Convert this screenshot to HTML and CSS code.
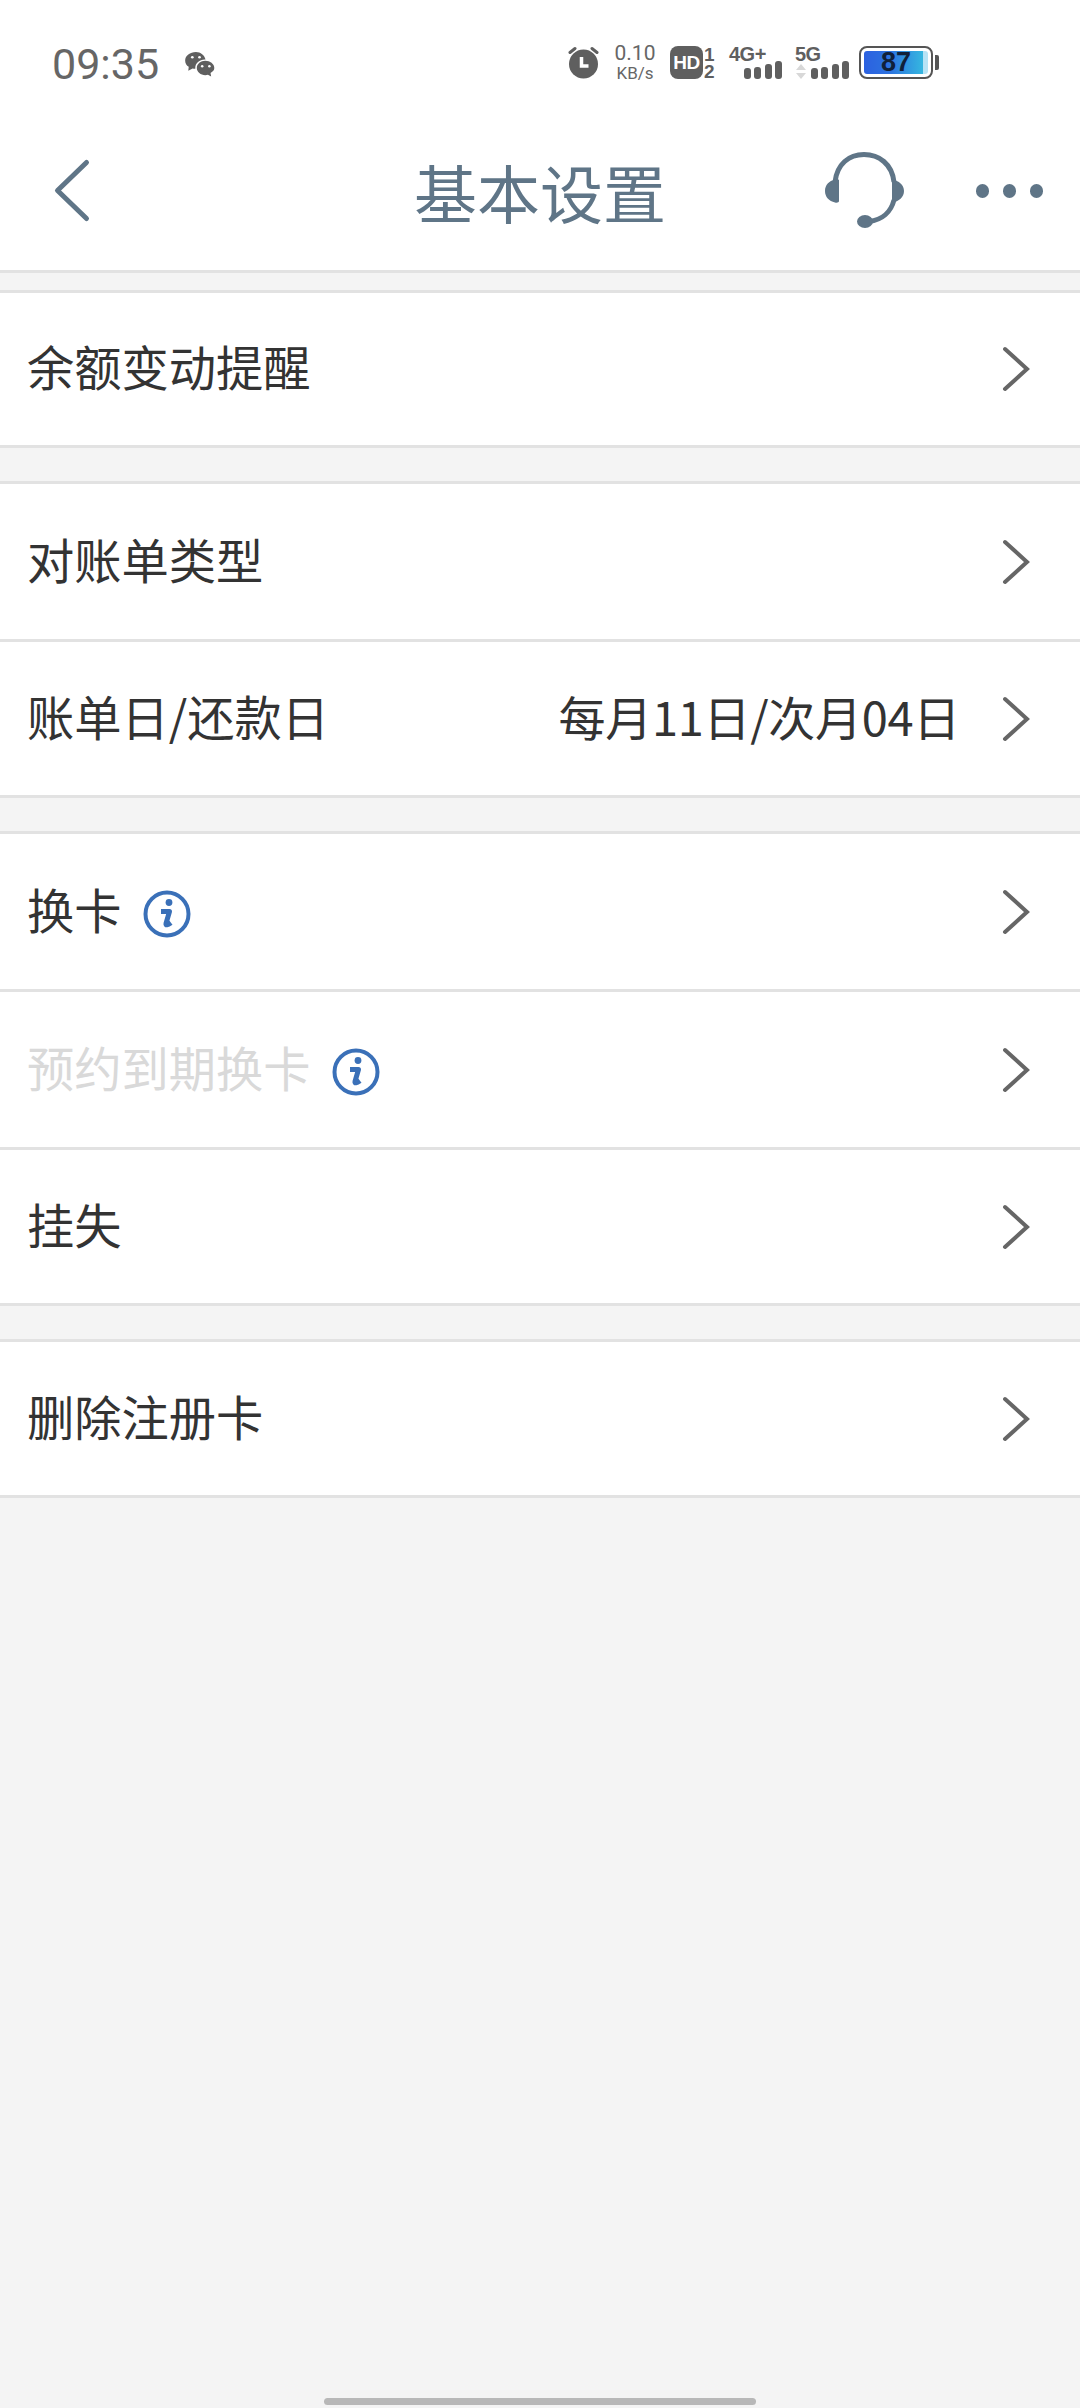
FILE: index.html
```html
<!DOCTYPE html>
<html lang="zh">
<head>
<meta charset="utf-8">
<title>基本设置</title>
<link rel="stylesheet" href="styles.css">
</head>
<body>
<div class="status">
  <div class="status-left">
    <span class="time">09:35</span>
    <svg class="wechat" width="31" height="26" viewBox="0 0 34 29"><path d="M13 1C6.500 1 1 5 1 10.500c0 3 1.500 5.500 4 7.200L4.500 22l4.800-2.500c1 .3 2 .4 3 .4 0-.3 0-.6 0-.9 0-5.500 4.700-9.500 10.500-9.500h.9C22.700 4.500 18.300 1 13 1z" fill="#5f5f5f"/><path d="M23.500 11c-5.200 0-9.500 3.500-9.500 8s4.300 8 9.500 8c1 0 2-.1 2.900-.4L30 28.500l-.7-4c2.800-1.500 4.200-3.400 4.200-5.500 0-4.500-4.800-8-10-8z" fill="#5f5f5f"/><circle cx="9" cy="7" r="1.500" fill="#fff"/><circle cx="17" cy="7" r="1.500" fill="#fff"/><circle cx="20" cy="17" r="1.400" fill="#fff"/><circle cx="28" cy="17" r="1.400" fill="#fff"/></svg>
  </div>
  <div class="status-right">
    <svg class="alarm" width="31" height="33" viewBox="0 0 31 33"><circle cx="15.500" cy="18" r="14.500" fill="#5f5f5f"/><path d="M2 6.500L7 2.500M29 6.500L24 2.500" stroke="#5f5f5f" stroke-width="3" stroke-linecap="round"/><path d="M13.500 11v9h7" fill="none" stroke="#fff" stroke-width="3.500"/></svg>
    <div class="speed"><span class="speed-num">0.10</span><span class="speed-unit">KB/s</span></div>
    <div class="hd"><span class="hd-box">HD</span><span class="hd-nums"><b>1</b><b>2</b></span></div>
    <div class="net net-4g"><span class="net-name">4G+</span><span class="bars"><i class="b1"></i><i class="b2"></i><i class="b3"></i><i class="b4"></i></span></div>
    <div class="net net-5g"><span class="net-name">5G</span><svg class="arrows" width="10" height="15" viewBox="0 0 10 15"><path d="M5 0l5 6H0zM5 15l5-6H0z" fill="#d8d8d8"/></svg><span class="bars"><i class="b1"></i><i class="b2"></i><i class="b3"></i><i class="b4"></i></span></div>
    <div class="battery"><div class="battery-body"><span class="battery-text">87</span></div><span class="battery-cap"></span></div>
  </div>
</div>
<header class="nav">
  <svg class="back" width="40" height="66" viewBox="0 0 40 66"><path d="M34.500 4.500L5.500 32.500l29 28" fill="none" stroke="#5f7587" stroke-width="5" stroke-linecap="round" stroke-linejoin="round"/></svg>
  <h1 class="title">基本设置</h1>
  <div class="nav-actions">
    <svg class="headset" width="79" height="76" viewBox="0 0 79 76"><path d="M10 30C12 12 24 2.500 39 2.500S67 12 69 30M69 48C66 60 57 68 44 69.500" fill="none" stroke="#5f7587" stroke-width="5"/><path d="M14 28v21c0 1.500-2 2-4 1.500C4 49 0 45 0 39s4-10 10-11.500c2-.5 4 0 4 .5zM67 27.500c7 1 12 5.500 12 11.500s-5 10.500-12 11.500z" fill="#5f7587"/><ellipse cx="40" cy="69.500" rx="8" ry="6.500" fill="#5f7587"/></svg>
    <div class="dots"><i></i><i></i><i></i></div>
  </div>
</header>
<main class="content">
  <section class="group">
    <a class="row row-155"><span class="label">余额变动提醒</span><svg class="chev" width="28" height="46" viewBox="0 0 28 46"><path d="M3 3l22 20L3 43" fill="none" stroke="#666" stroke-width="4" stroke-linecap="round"/></svg></a>
  </section>
  <section class="group">
    <a class="row row-158"><span class="label">对账单类型</span><svg class="chev" width="28" height="46" viewBox="0 0 28 46"><path d="M3 3l22 20L3 43" fill="none" stroke="#666" stroke-width="4" stroke-linecap="round"/></svg></a>
    <a class="row row-156"><span class="label">账单日/还款日</span><span class="value">每月11日/次月04日</span><svg class="chev" width="28" height="46" viewBox="0 0 28 46"><path d="M3 3l22 20L3 43" fill="none" stroke="#666" stroke-width="4" stroke-linecap="round"/></svg></a>
  </section>
  <section class="group">
    <a class="row row-158"><span class="label">换卡</span><svg class="info" width="48" height="48" viewBox="0 0 48 48"><circle cx="24" cy="24" r="21.500" fill="none" stroke="#3a70b8" stroke-width="4"/><circle cx="26" cy="12.500" r="3.400" fill="#3a70b8"/><path d="M18 21.500h8.500l-3.500 12c-.4 2 1.500 1.800 5-.8" fill="none" stroke="#3a70b8" stroke-width="5" stroke-linejoin="round"/></svg><svg class="chev" width="28" height="46" viewBox="0 0 28 46"><path d="M3 3l22 20L3 43" fill="none" stroke="#666" stroke-width="4" stroke-linecap="round"/></svg></a>
    <a class="row row-158"><span class="label label-off">预约到期换卡</span><svg class="info" width="48" height="48" viewBox="0 0 48 48"><circle cx="24" cy="24" r="21.500" fill="none" stroke="#3a70b8" stroke-width="4"/><circle cx="26" cy="12.500" r="3.400" fill="#3a70b8"/><path d="M18 21.500h8.500l-3.500 12c-.4 2 1.500 1.800 5-.8" fill="none" stroke="#3a70b8" stroke-width="5" stroke-linejoin="round"/></svg><svg class="chev" width="28" height="46" viewBox="0 0 28 46"><path d="M3 3l22 20L3 43" fill="none" stroke="#666" stroke-width="4" stroke-linecap="round"/></svg></a>
    <a class="row row-156"><span class="label">挂失</span><svg class="chev" width="28" height="46" viewBox="0 0 28 46"><path d="M3 3l22 20L3 43" fill="none" stroke="#666" stroke-width="4" stroke-linecap="round"/></svg></a>
  </section>
  <section class="group">
    <a class="row row-156"><span class="label">删除注册卡</span><svg class="chev" width="28" height="46" viewBox="0 0 28 46"><path d="M3 3l22 20L3 43" fill="none" stroke="#666" stroke-width="4" stroke-linecap="round"/></svg></a>
  </section>
</main>
<div class="home-bar"></div>
</body>
</html>
```
FILE: styles.css
```css
* { box-sizing: border-box; }
html, body { margin: 0; padding: 0; }
body {
  width: 1080px;
  height: 2408px;
  background: #f4f4f4;
  font-family: "Noto Sans CJK SC", "Noto Sans", sans-serif;
  position: relative;
  overflow: hidden;
}
.status {
  height: 120px;
  background: #fff;
  display: flex;
  align-items: center;
  justify-content: space-between;
  padding: 8px 141px 0 52px;
}
.status-left { display: flex; align-items: center; gap: 25px; }
.time { font-family: Roboto, sans-serif; font-size: 43px; line-height: 50px; color: #666; }
.wechat { margin-bottom: 1px; }
.status-right { display: flex; align-items: center; padding-bottom: 3px; }
.speed { display: flex; flex-direction: column; align-items: center; width: 38px; margin-left: 17px; font-family: Roboto, sans-serif; color: #666; line-height: 1; }
.speed-num { font-size: 21px; }
.speed-unit { font-size: 17px; margin-top: 1px; }
.hd { display: flex; align-items: center; gap: 1px; margin-left: 16px; }
.hd-box { width: 33px; height: 33px; border-radius: 8px; background: #5f5f5f; color: #fff; font: 700 19px "Liberation Sans", sans-serif; letter-spacing: -0.5px; display: flex; align-items: center; justify-content: center; }
.hd-nums { display: flex; flex-direction: column; width: 12px; font: 700 19px/17px "Liberation Sans", sans-serif; color: #5f5f5f; }
.hd-nums b { display: block; }
.net { color: #5f5f5f; height: 33px; position: relative; }
.net-4g { width: 53px; margin-left: 13px; }
.net-5g { width: 54px; margin-left: 13px; }
.net-name { display: block; font: 700 20px/17px "Liberation Sans", sans-serif; letter-spacing: -0.5px; }
.arrows { position: absolute; left: 1px; bottom: 0; }
.bars { display: flex; gap: 3.500px; align-items: flex-end; position: absolute; right: 0; bottom: 0; }
.bars i { display: block; width: 7px; background: #5f5f5f; border-radius: 3px; }
.b1 { height: 11px; }
.b2 { height: 12px; }
.b3 { height: 15px; }
.b4 { height: 18px; }
.battery { display: flex; align-items: center; gap: 2px; margin-left: 10px; }
.battery-body { width: 74px; height: 33px; border: 2px solid #555; border-radius: 8px; background: linear-gradient(90deg, #2c5fe0 0%, #2c72e0 40%, #35b6e0 88%, #b7e3f5 88%); background-clip: content-box; padding: 3px; display: flex; align-items: center; justify-content: center; }
.battery-text { font: 700 27px/1 "Liberation Sans", sans-serif; color: #10203a; }
.battery-cap { width: 4px; height: 15px; background: #555; border-radius: 0 2px 2px 0; }
.nav {
  height: 153px;
  background: #fff;
  border-bottom: 3px solid #e2e2e2;
  display: grid;
  grid-template-columns: 1fr auto 1fr;
  align-items: start;
}
.back { margin: 38px 0 0 52px; }
.title { margin: 35px 0 0; font-size: 63px; font-weight: 400; line-height: 72px; color: #5f7587; }
.nav-actions { display: flex; align-items: flex-start; justify-content: flex-end; padding-right: 37px; }
.headset { margin-top: 32px; }
.dots { display: flex; gap: 13.500px; margin: 64px 0 0 72px; }
.dots i { display: block; width: 13.500px; height: 13.500px; border-radius: 50%; background: #5f7587; }
.content { padding-top: 17px; }
.group { background: #fff; border-top: 3px solid #e2e2e2; margin-bottom: 33px; }
.row { display: flex; align-items: center; padding: 0 50px 0 27px; border-bottom: 3px solid #e2e2e2; color: #333; text-decoration: none; }
.row-155 { height: 155px; }
.row-156 { height: 156px; }
.row-158 { height: 158px; }
.label { font-size: 47.250px; line-height: 60px; color: #333; margin-bottom: 6px; }
.label-off { color: #d9d9d9; }
.value { margin-left: auto; margin-right: 42px; font-size: 47px; letter-spacing: -0.3px; line-height: 60px; color: #333; margin-bottom: 6px; }
.info { margin-left: 21px; margin-top: 4px; }
.chev { margin-left: auto; }
.value + .chev { margin-left: 0; }
.home-bar { position: absolute; left: 324px; top: 2398px; width: 432px; height: 7px; border-radius: 4px; background: #b8b8b8; }
```
